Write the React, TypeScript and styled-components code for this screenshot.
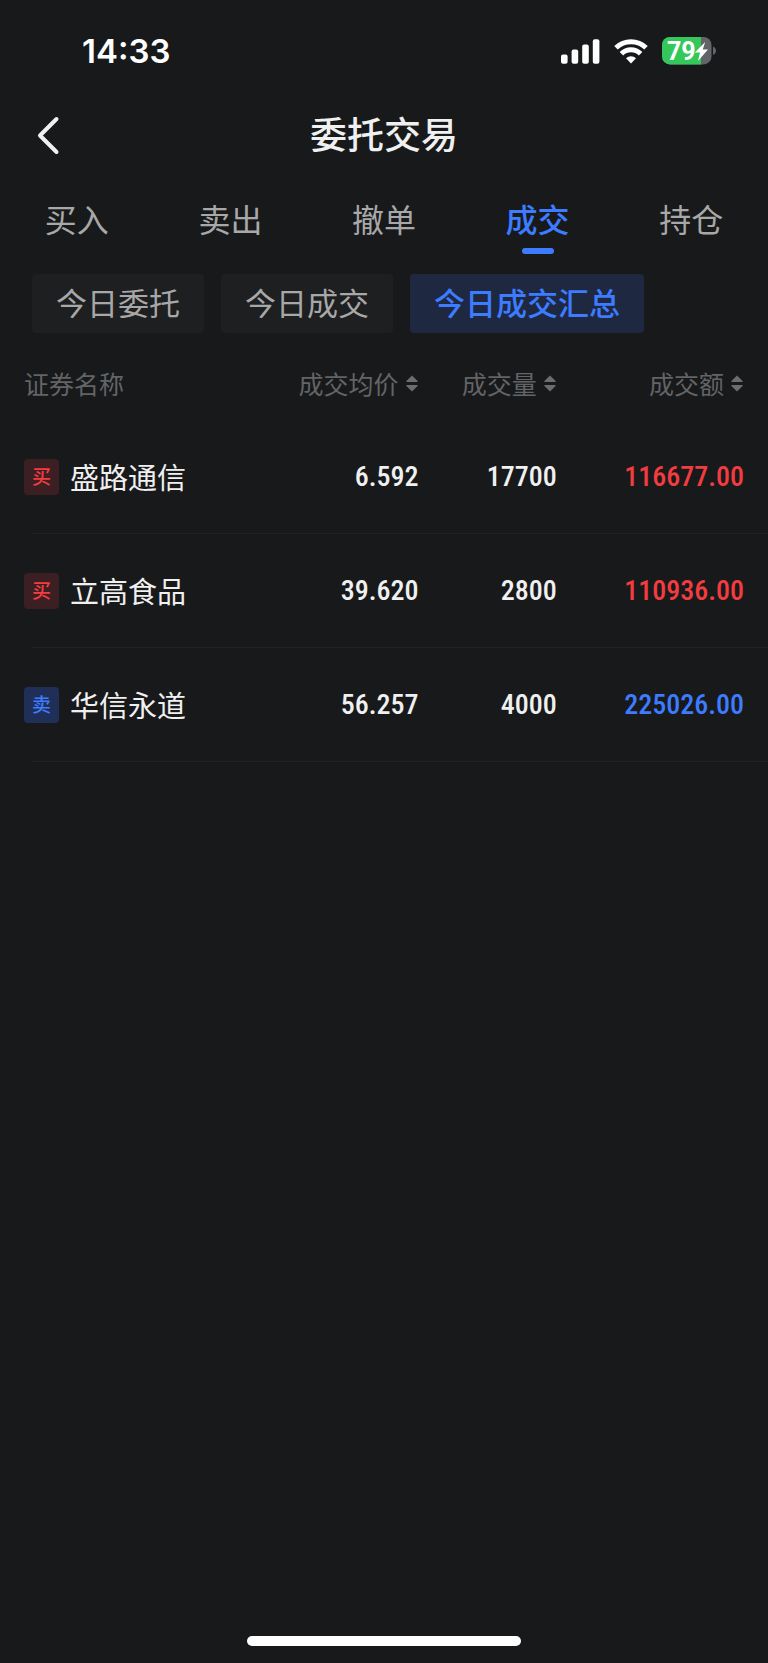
import React, { useState } from "react";
import styled, { createGlobalStyle } from "styled-components";

const color = {
  bg: "#18191b",
  title: "#f0f0f0",
  text: "#a8a8a8",
  muted: "#636466",
  blue: "#3d7bff",
  red: "#f23c40",
  chip: "#1e1f21",
  chipActive: "#1e2840",
  line: "#212224",
};

const GlobalStyle = createGlobalStyle`
  * { box-sizing: border-box; }
  body { margin: 0; background: ${color.bg}; }
  button { border: 0; padding: 0; background: none; font: inherit; color: inherit; cursor: pointer; }
`;

const Screen = styled.div`
  display: flex;
  flex-direction: column;
  min-height: 100vh;
  background: ${color.bg};
  color: ${color.title};
  font-family: "Noto Sans CJK SC", sans-serif;
`;

const StatusBar = styled.div`
  display: flex;
  align-items: center;
  justify-content: space-between;
  height: 92px;
  padding: 10px 52px 0 82px;
  color: #fff;
  font-family: Inter, sans-serif;
`;

const Time = styled.time`
  font-size: 33px;
  line-height: 40px;
  font-weight: 600;
`;

const StatusIcons = styled.div`
  display: flex;
  align-items: center;
  gap: 14px;
`;

const NavBar = styled.header`
  display: grid;
  grid-template-columns: 1fr auto 1fr;
  align-items: center;
  height: 88px;
  padding: 0 36px;
`;

const BackButton = styled.button`
  display: flex;
  justify-self: start;
`;

const Title = styled.h1`
  margin: 0;
  padding-bottom: 6px;
  font-size: 37px;
  line-height: 48px;
  font-weight: 500;
`;

const Tabs = styled.nav`
  display: grid;
  grid-template-columns: repeat(5, 1fr);
  height: 94px;
`;

const Tab = styled.button<{ $active: boolean }>`
  display: flex;
  flex-direction: column;
  align-items: center;
  padding-top: 14px;
  color: ${(p) => (p.$active ? color.blue : color.text)};
  font-size: 32px;
  line-height: 48px;
  font-weight: ${(p) => (p.$active ? 500 : 400)};

  &::after {
    content: "";
    width: 32px;
    height: 6px;
    margin-top: 6px;
    border-radius: 3px;
    background: ${(p) => (p.$active ? color.blue : "transparent")};
  }
`;

const Chips = styled.div`
  display: flex;
  gap: 17px;
  padding: 0 32px;
`;

const Chip = styled.button<{ $active: boolean }>`
  height: 59px;
  padding: 0 24px 4px;
  border-radius: 4px;
  background: ${(p) => (p.$active ? color.chipActive : color.chip)};
  color: ${(p) => (p.$active ? color.blue : color.text)};
  font-size: 31px;
  line-height: 55px;
  font-weight: ${(p) => (p.$active ? 500 : 400)};
  white-space: nowrap;
`;

const Table = styled.table`
  width: 100%;
  margin-top: 15px;
  table-layout: fixed;
  border-collapse: collapse;
`;

const Col = styled.col<{ $width: string }>`
  width: ${(p) => p.$width};
`;

const HeadCell = styled.th<{ $left?: boolean }>`
  height: 72px;
  padding: 0 0 2px;
  padding-left: ${(p) => (p.$left ? "24px" : "0")};
  text-align: ${(p) => (p.$left ? "left" : "right")};
  color: ${color.muted};
  font-size: 25px;
  line-height: 36px;
  font-weight: 400;
  white-space: nowrap;

  &:last-child { padding-right: 24px; }
`;

const SortButton = styled.button`
  display: inline-flex;
  align-items: center;
  gap: 7px;
`;

const Row = styled.tr`
  height: 114px;
  background: linear-gradient(${color.line}, ${color.line}) 32px 100% / 100% 1px no-repeat;
`;

const NameCell = styled.th`
  padding: 0 0 0 24px;
  text-align: left;
  font-size: 29px;
  line-height: 44px;
  font-weight: 400;
  white-space: nowrap;
`;

const NameInner = styled.div`
  display: flex;
  align-items: center;
  gap: 11px;
`;

const Name = styled.span`
  padding-bottom: 2px;
`;

const Badge = styled.span<{ $sell: boolean }>`
  width: 35px;
  height: 36px;
  border-radius: 4px;
  background: ${(p) => (p.$sell ? "#202f57" : "#3b1f23")};
  color: ${(p) => (p.$sell ? color.blue : color.red)};
  font-size: 19px;
  line-height: 34px;
  font-weight: 500;
  text-align: center;
`;

const NumCell = styled.td<{ $color?: string }>`
  padding: 0;
  text-align: right;
  color: ${(p) => p.$color ?? color.title};
  font-family: "Roboto Condensed", Roboto, sans-serif;
  font-size: 28px;
  line-height: 36px;
  font-weight: 500;

  &:last-child { padding-right: 24px; }
`;

const HomeIndicator = styled.div`
  width: 274px;
  height: 10px;
  margin: auto auto 17px;
  border-radius: 5px;
  background: #fff;
`;

const BatteryText = styled.text`
  font-family: Roboto, sans-serif;
  font-size: 25px;
  font-weight: 700;
`;

const SignalIcon = () => (
  <svg width="39" height="25" viewBox="0 0 39 25" fill="#fff" aria-hidden="true">
    <rect x="0" y="15.5" width="6.6" height="9.2" rx="2" />
    <rect x="10.6" y="10.5" width="6.6" height="14.2" rx="2" />
    <rect x="21.2" y="5.5" width="6.6" height="19.2" rx="2" />
    <rect x="31.8" y="0.3" width="6.6" height="24.4" rx="2" />
  </svg>
);

const WifiIcon = () => (
  <svg width="34" height="25" viewBox="0 0 34 25" fill="none" stroke="#fff" strokeWidth="5" aria-hidden="true">
    <path d="M2 8.8 A21.6 21.6 0 0 1 32 8.8" />
    <path d="M7.4 14.8 A13.6 13.6 0 0 1 26.6 14.8" />
    <path d="M12 19.3 A7.2 7.2 0 0 1 22 19.3 L17 24.6 Z" fill="#fff" stroke="none" />
  </svg>
);

const BatteryIcon = () => (
  <svg width="54" height="28" viewBox="0 0 54 28" aria-label="79%">
    <defs>
      <clipPath id="battery-body">
        <rect width="49.5" height="27.4" rx="8" />
      </clipPath>
    </defs>
    <g clipPath="url(#battery-body)">
      <rect width="50" height="28" fill="#636467" />
      <rect width="39" height="28" fill="#34c759" />
    </g>
    <path d="M51 9.4 C55 11 55 16.4 51 18 Z" fill="#636467" />
    <BatteryText x="5" y="23" fill="#fff">79</BatteryText>
    <path d="M43.2 5 L32.8 15.6 H38 L36 24 L46 12.6 H40.8 Z" fill="#fff" />
  </svg>
);

const BackIcon = () => (
  <svg width="24" height="40" viewBox="0 0 24 40" fill="none" stroke="#f0f0f0" strokeWidth="4" strokeLinecap="round" strokeLinejoin="round">
    <path d="M20.5 3 L4 19.5 L20.5 36" />
  </svg>
);

const SortIcon = () => (
  <svg width="13" height="17" viewBox="0 0 13 17" fill="#6c6d6f" aria-hidden="true">
    <path d="M6 .4 L11.6 6 Q12 7 11 7 H1 Q0 7 .4 6 Z" />
    <path d="M6 16.4 L11.6 11 Q12 10 11 10 H1 Q0 10 .4 11 Z" />
  </svg>
);

const tabs = ["买入", "卖出", "撤单", "成交", "持仓"];
const chips = ["今日委托", "今日成交", "今日成交汇总"];
const sortable = ["成交均价", "成交量", "成交额"];
const trades = [
  { side: "买", name: "盛路通信", price: "6.592", volume: "17700", amount: "116677.00" },
  { side: "买", name: "立高食品", price: "39.620", volume: "2800", amount: "110936.00" },
  { side: "卖", name: "华信永道", price: "56.257", volume: "4000", amount: "225026.00" },
];

export default function App() {
  const [tab, setTab] = useState("成交");
  const [chip, setChip] = useState("今日成交汇总");

  return (
    <Screen>
      <GlobalStyle />
      <StatusBar>
        <Time>14:33</Time>
        <StatusIcons>
          <SignalIcon />
          <WifiIcon />
          <BatteryIcon />
        </StatusIcons>
      </StatusBar>
      <NavBar>
        <BackButton aria-label="返回">
          <BackIcon />
        </BackButton>
        <Title>委托交易</Title>
      </NavBar>
      <Tabs>
        {tabs.map((t) => (
          <Tab key={t} $active={t === tab} onClick={() => setTab(t)}>
            {t}
          </Tab>
        ))}
      </Tabs>
      <Chips>
        {chips.map((c) => (
          <Chip key={c} $active={c === chip} onClick={() => setChip(c)}>
            {c}
          </Chip>
        ))}
      </Chips>
      <Table>
        <colgroup>
          <Col $width="37%" />
          <Col $width="17.5%" />
          <Col $width="18%" />
          <Col $width="27.5%" />
        </colgroup>
        <thead>
          <tr>
            <HeadCell $left scope="col">证券名称</HeadCell>
            {sortable.map((label) => (
              <HeadCell key={label} scope="col">
                <SortButton>
                  {label}
                  <SortIcon />
                </SortButton>
              </HeadCell>
            ))}
          </tr>
        </thead>
        <tbody>
          {trades.map((t) => {
            const sell = t.side === "卖";
            return (
              <Row key={t.name}>
                <NameCell scope="row">
                  <NameInner>
                    <Badge $sell={sell}>{t.side}</Badge>
                    <Name>{t.name}</Name>
                  </NameInner>
                </NameCell>
                <NumCell>{t.price}</NumCell>
                <NumCell>{t.volume}</NumCell>
                <NumCell $color={sell ? color.blue : color.red}>{t.amount}</NumCell>
              </Row>
            );
          })}
        </tbody>
      </Table>
      <HomeIndicator />
    </Screen>
  );
}
